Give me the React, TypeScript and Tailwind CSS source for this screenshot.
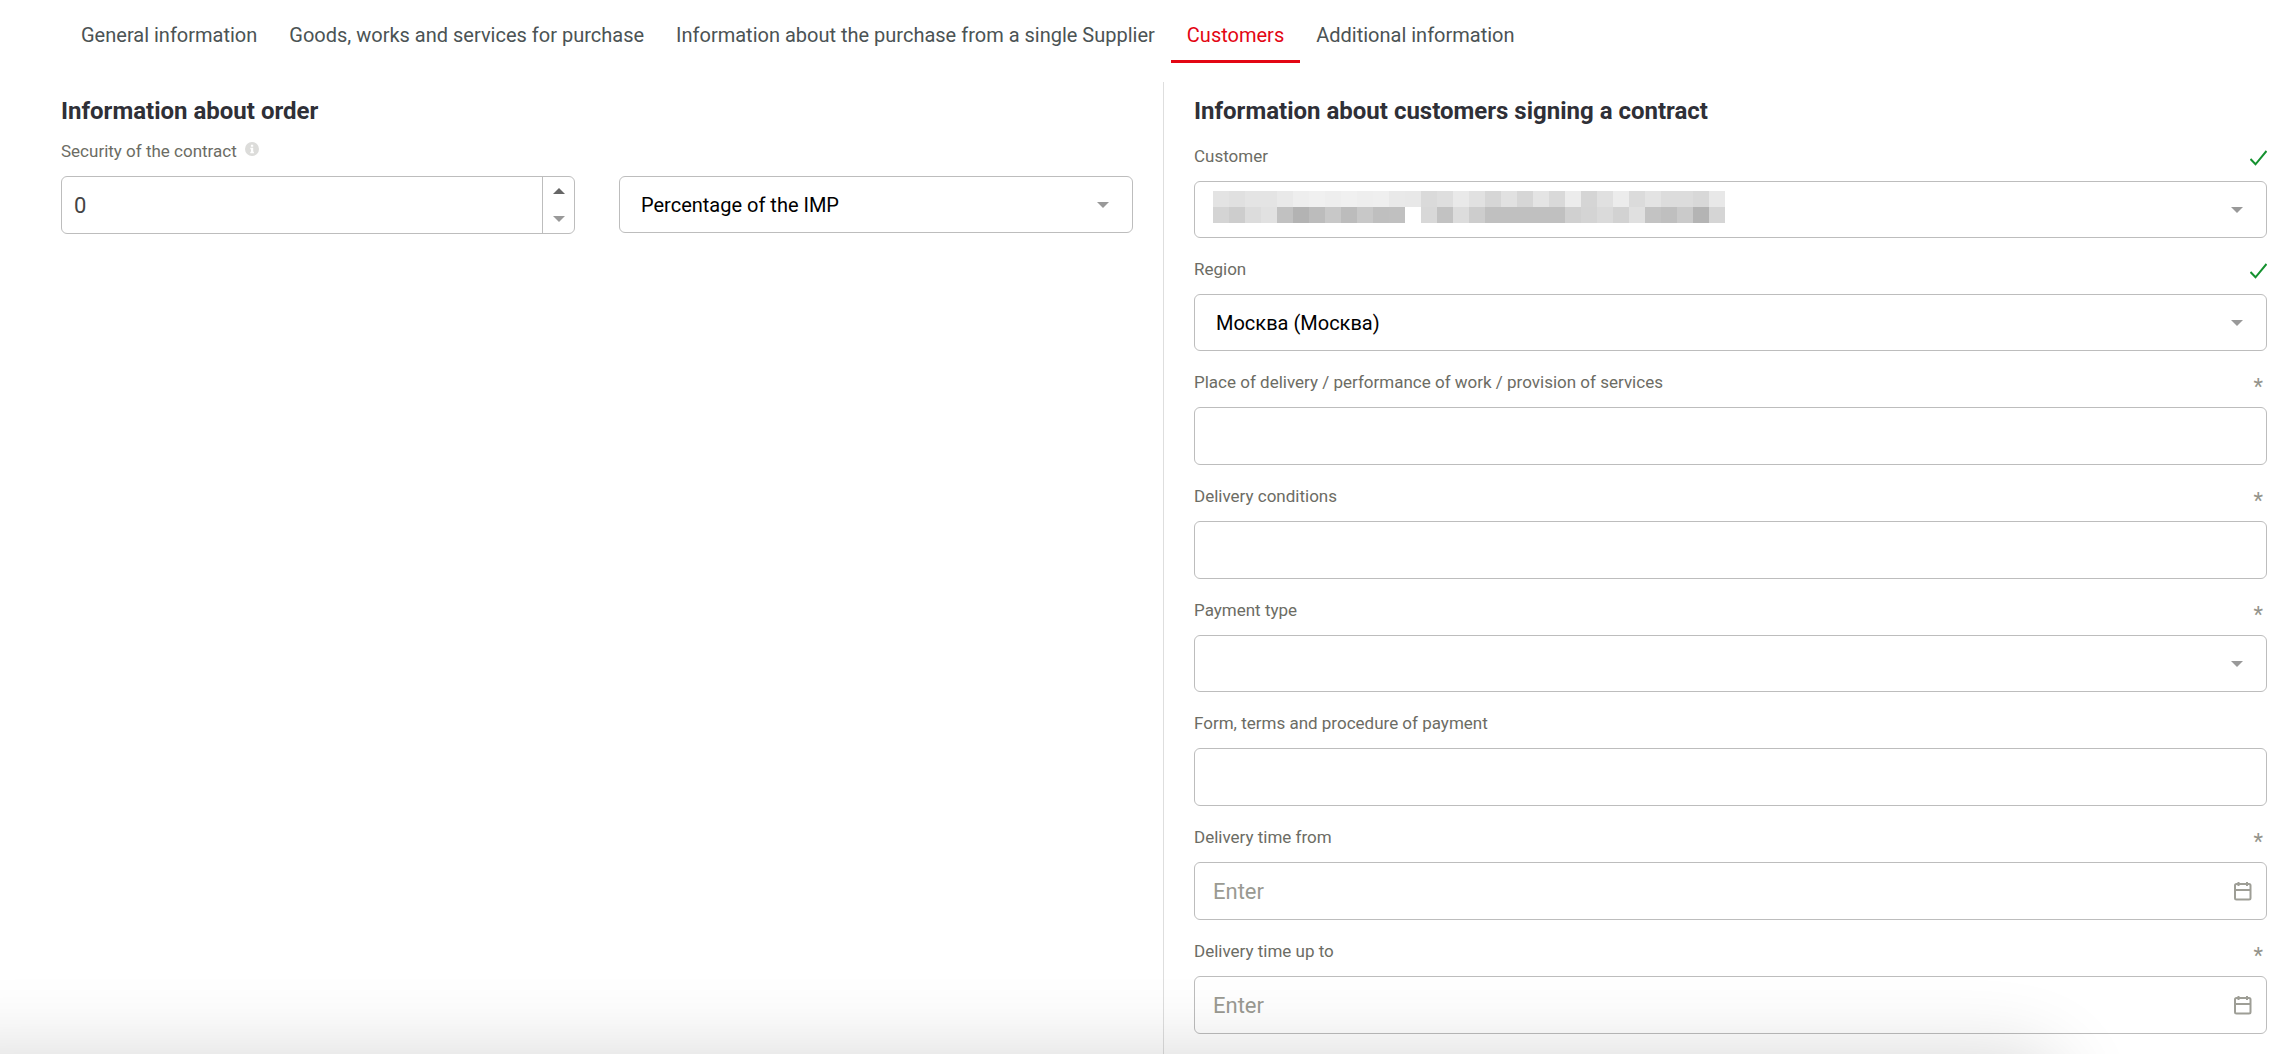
import clsx from "clsx";
import { useId, useState } from "react";
import type { ReactNode } from "react";

type FieldStatus = "valid" | "required";

type FieldProps = {
  id: string;
  label: string;
  status?: FieldStatus;
  children: ReactNode;
};

type SelectProps = {
  id?: string;
  label?: string;
  options: string[];
  children?: ReactNode;
};

const TABS = [
  "General information",
  "Goods, works and services for purchase",
  "Information about the purchase from a single Supplier",
  "Customers",
  "Additional information",
];

// Grey levels of the masked customer name, one row of cells per array
const MASK_ROWS = [
  [
    227, 224, 228, 228, 233, 238, 240, 238, 240, 238, 239, 233, 232, 218, 222,
    233, 225, 214, 225, 214, 228, 217, 236, 213, 224, 236, 219, 227, 220, 220,
    216, 232,
  ],
  [
    212, 205, 220, 225, 193, 179, 188, 200, 188, 200, 191, 192, 255, 216, 194,
    220, 205, 192, 192, 192, 192, 192, 208, 212, 218, 210, 224, 195, 191, 202,
    180, 213,
  ],
];

const boxClass =
  "w-full rounded-md border border-[#bdbdbd] bg-white outline-none focus:border-[#8c8c8c]";

const Triangle = ({ className }: { className?: string }) => (
  <svg viewBox="0 0 12 6" className={clsx("h-1.5 w-3", className)}>
    <path d="M0 0h12L6 6z" fill="currentColor" />
  </svg>
);

const CheckIcon = () => (
  <svg
    viewBox="0 0 17 16"
    fill="none"
    stroke="#14912f"
    strokeWidth="2"
    className="mt-1 h-4 w-[17px]"
  >
    <path d="M.5 9 5.5 14.3 16.5 1" />
  </svg>
);

const InfoIcon = () => (
  <svg viewBox="0 0 14 14" className="size-3.5">
    <circle cx="7" cy="7" r="7" fill="#dcdcda" />
    <path d="M5.9 2.8h2.3v2H5.9zM5.3 5.8h2.9v4h.7v1.4H5.3V9.8h.7V7.2h-.7z" fill="#fff" />
  </svg>
);

const CalendarIcon = () => (
  <svg
    viewBox="0 0 18 20"
    fill="none"
    stroke="currentColor"
    strokeWidth="2"
    className="h-5 w-[18px]"
  >
    <rect x="1" y="3" width="15.5" height="15.5" rx="1.5" />
    <path d="M1 9h15.5M4.5 1v4M13 1v4" />
  </svg>
);

const Mask = () => (
  <div className="pointer-events-none absolute top-2.5 left-[19px] grid grid-cols-[repeat(32,16px)]">
    {MASK_ROWS.flat().map((level, i) => (
      <span
        key={i}
        className="size-4"
        style={{ backgroundColor: `rgb(${level}, ${level}, ${level})` }}
      />
    ))}
  </div>
);

const Field = ({ id, label, status, children }: FieldProps) => (
  <div className="flex flex-col gap-[13px]">
    <div className="flex h-6 items-center justify-between">
      <label htmlFor={id} className="text-[17px] leading-6 text-[#6c6c64]">
        {label}
      </label>
      {status === "valid" && <CheckIcon />}
      {status === "required" && (
        <span className="mt-2.5 pr-1 text-[22px] leading-6 text-[#94948c]">
          *
        </span>
      )}
    </div>
    {children}
  </div>
);

const Select = ({ id, label, options, children }: SelectProps) => (
  <div className="relative">
    <select
      id={id}
      aria-label={label}
      className={clsx(
        boxClass,
        "block h-[57px] appearance-none pr-12 pl-[21px] text-xl text-black",
      )}
    >
      {options.map((option) => (
        <option key={option}>{option}</option>
      ))}
    </select>
    {children}
    <Triangle className="pointer-events-none absolute top-[26px] right-6 text-[#999]" />
  </div>
);

const DateInput = ({ id }: { id: string }) => (
  <div className="relative">
    <input
      id={id}
      type="text"
      placeholder="Enter"
      className={clsx(
        boxClass,
        "block h-[58px] pr-12 pl-[18px] text-[22px] text-[#444] placeholder:text-[#9a9a92]",
      )}
    />
    <button
      type="button"
      aria-label="Open calendar"
      className="absolute inset-y-0 right-[15px] text-[#9e9e96]"
    >
      <CalendarIcon />
    </button>
  </div>
);

const NumberInput = ({ id }: { id: string }) => {
  const [value, setValue] = useState(0);

  return (
    <div className={clsx(boxClass, "flex h-[58px]")}>
      <input
        id={id}
        type="number"
        value={value}
        onChange={(e) => setValue(Number(e.target.value))}
        className="min-w-0 flex-1 appearance-none px-3 text-[22px] text-[#444] outline-none [-moz-appearance:textfield] [&::-webkit-inner-spin-button]:appearance-none"
      />
      <div className="flex w-8 flex-col border-l border-[#bdbdbd]">
        <button
          type="button"
          aria-label="Increase"
          onClick={() => setValue((prev) => prev + 1)}
          className="flex flex-1 items-center justify-center text-[#666]"
        >
          <Triangle className="rotate-180" />
        </button>
        <button
          type="button"
          aria-label="Decrease"
          onClick={() => setValue((prev) => Math.max(0, prev - 1))}
          className="flex flex-1 items-center justify-center text-[#999]"
        >
          <Triangle />
        </button>
      </div>
    </div>
  );
};

const OrderSection = () => {
  const id = useId();

  return (
    <section className="border-r border-[#dedede] pt-3.5 pr-[30px]">
      <h2 className="text-2xl leading-[30px] font-bold text-[#2f3037]">
        Information about order
      </h2>
      <div className="mt-[13px] flex gap-2">
        <label htmlFor={id} className="text-[17px] leading-6 text-[#6c6c64]">
          Security of the contract
        </label>
        <span title="Security of the contract" className="pt-[3px]">
          <InfoIcon />
        </span>
      </div>
      <div className="mt-[13px] grid grid-cols-2 gap-11">
        <NumberInput id={id} />
        <Select
          label="Security unit"
          options={["Percentage of the IMP", "Amount"]}
        />
      </div>
    </section>
  );
};

const CustomersSection = () => {
  const id = useId();

  return (
    <section className="pt-3.5 pb-5 pl-[30px]">
      <h2 className="text-2xl leading-[30px] font-bold text-[#2f3037]">
        Information about customers signing a contract
      </h2>
      <form className="mt-[18px] flex flex-col gap-[19px]">
        <Field id={`${id}-customer`} label="Customer" status="valid">
          <Select id={`${id}-customer`} options={[""]}>
            <Mask />
          </Select>
        </Field>
        <Field id={`${id}-region`} label="Region" status="valid">
          <Select id={`${id}-region`} options={["Москва (Москва)"]} />
        </Field>
        <Field
          id={`${id}-place`}
          label="Place of delivery / performance of work / provision of services"
          status="required"
        >
          <input
            id={`${id}-place`}
            type="text"
            className={clsx(boxClass, "h-[58px] px-[18px] text-[22px]")}
          />
        </Field>
        <Field
          id={`${id}-conditions`}
          label="Delivery conditions"
          status="required"
        >
          <input
            id={`${id}-conditions`}
            type="text"
            className={clsx(boxClass, "h-[58px] px-[18px] text-[22px]")}
          />
        </Field>
        <Field id={`${id}-payment`} label="Payment type" status="required">
          <Select id={`${id}-payment`} options={[""]} />
        </Field>
        <Field id={`${id}-terms`} label="Form, terms and procedure of payment">
          <input
            id={`${id}-terms`}
            type="text"
            className={clsx(boxClass, "h-[58px] px-[18px] text-[22px]")}
          />
        </Field>
        <Field id={`${id}-from`} label="Delivery time from" status="required">
          <DateInput id={`${id}-from`} />
        </Field>
        <Field id={`${id}-to`} label="Delivery time up to" status="required">
          <DateInput id={`${id}-to`} />
        </Field>
      </form>
    </section>
  );
};

const App = () => {
  const [activeTab, setActiveTab] = useState("Customers");

  return (
    <div className="flex min-h-screen flex-col bg-white font-[Roboto,sans-serif]">
      <nav className="mb-[19px] flex pl-[65px]">
        {TABS.map((tab) => (
          <button
            key={tab}
            type="button"
            onClick={() => setActiveTab(tab)}
            className={clsx(
              "border-b-3 px-4 pt-[23px] pb-[13px] text-xl leading-6",
              tab === activeTab
                ? "border-[#e30613] text-[#e30613]"
                : "border-transparent text-[#4b5354]",
            )}
          >
            {tab}
          </button>
        ))}
      </nav>

      <main className="grid flex-1 grid-cols-2 pr-[23px] pl-[61px]">
        <OrderSection />
        <CustomersSection />
      </main>

      {/* Shadow of the panel docked under the window */}
      <div className="pointer-events-none fixed top-full right-[230px] -left-24 h-40 rounded-[40px] shadow-[0_0_80px_rgba(0,0,0,0.16)]" />
    </div>
  );
};

export default App;
